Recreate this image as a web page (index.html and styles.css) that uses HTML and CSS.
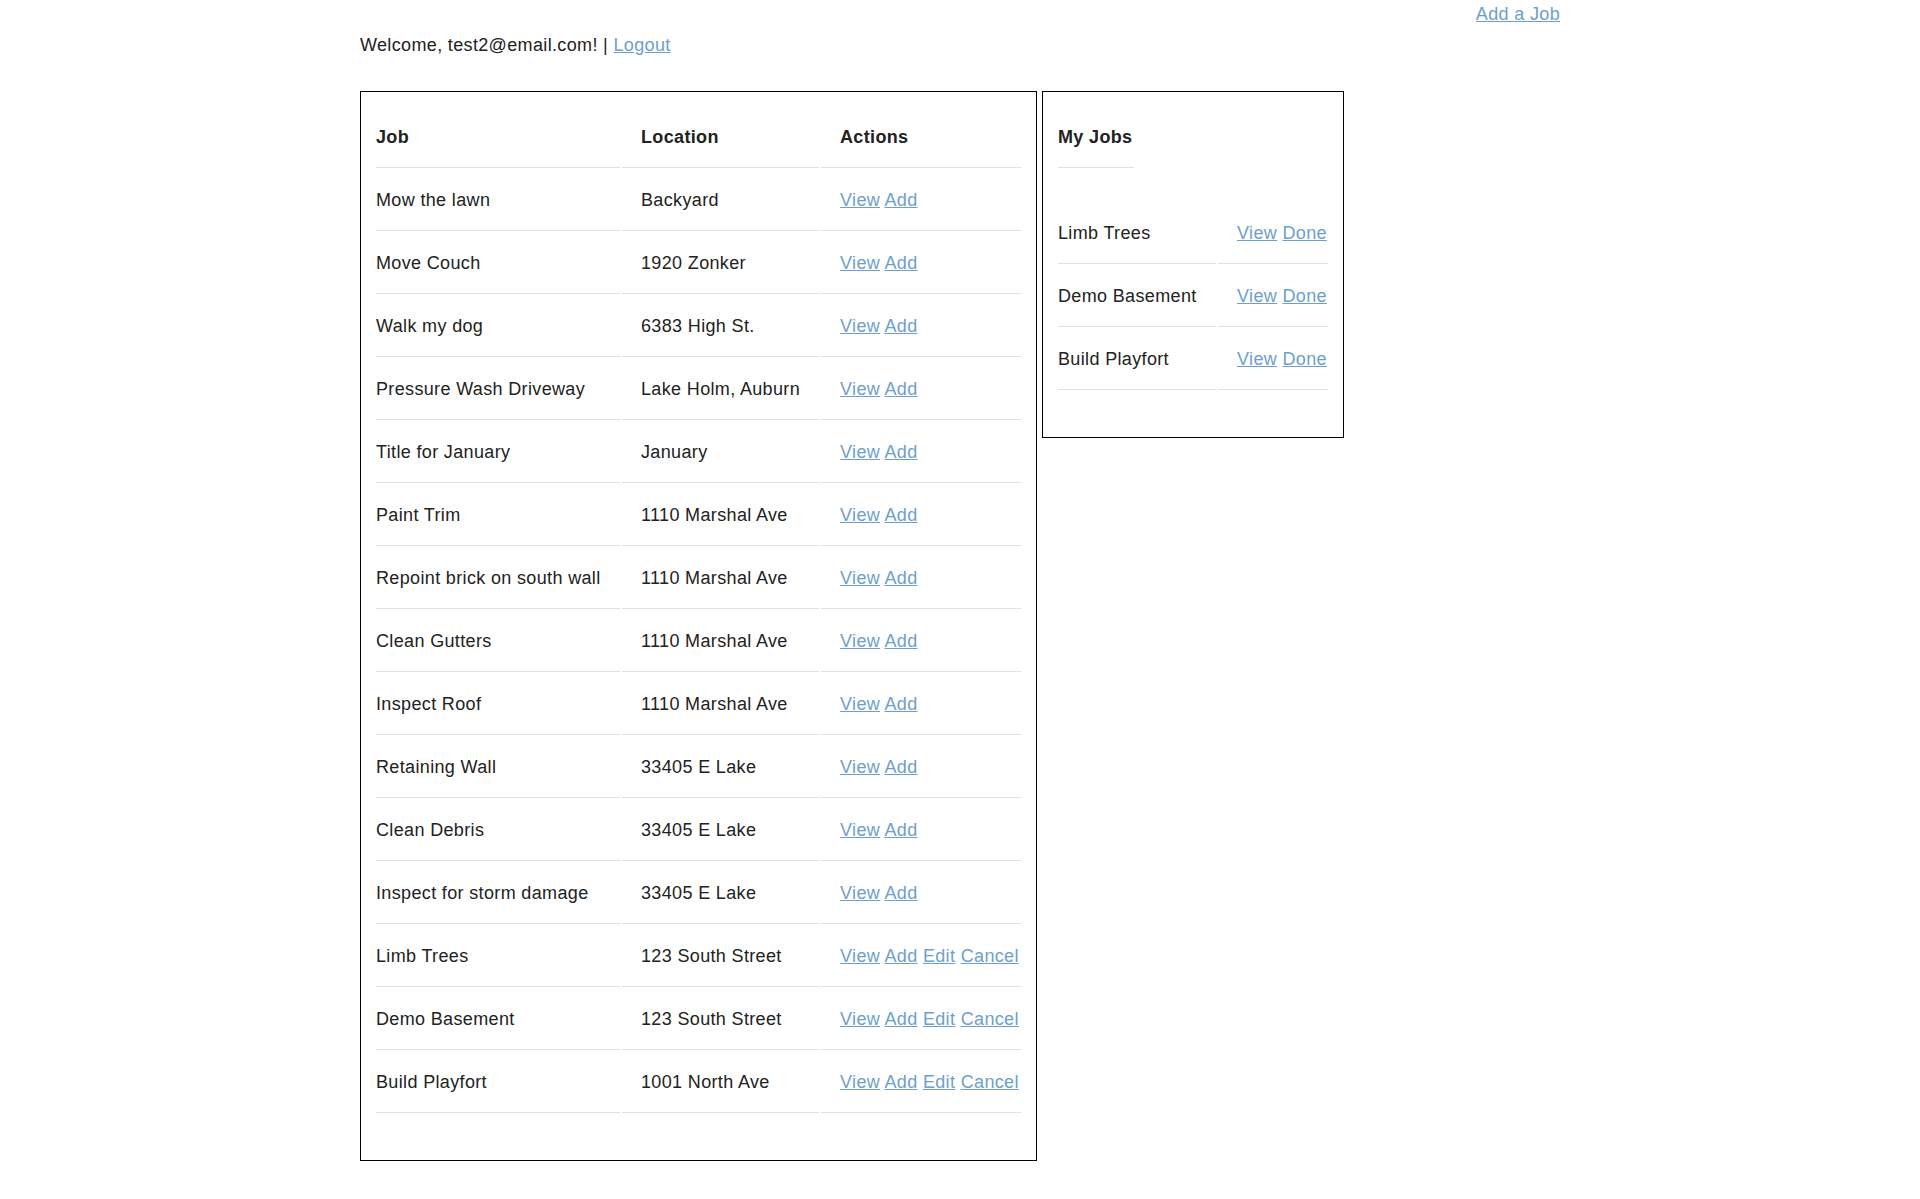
FILE: index.html
```html
<!DOCTYPE html>
<html lang="en">
<head>
<meta charset="utf-8">
<title>Jobs</title>
<link rel="stylesheet" href="styles.css">
</head>
<body>
<div class="container">
  <div class="topbar"><a href="#">Add a Job</a></div>
  <p class="welcome">Welcome, test2@email.com! | <a href="#">Logout</a></p>
  <div class="panels">
    <div class="panel panel-jobs">
      <table class="jobs">
        <thead>
          <tr><th class="c1">Job</th><th class="c2">Location</th><th class="c3">Actions</th></tr>
        </thead>
        <tbody>
          <tr><td>Mow the lawn</td><td>Backyard</td><td><a href="#">View</a> <a href="#">Add</a></td></tr>
          <tr><td>Move Couch</td><td>1920 Zonker</td><td><a href="#">View</a> <a href="#">Add</a></td></tr>
          <tr><td>Walk my dog</td><td>6383 High St.</td><td><a href="#">View</a> <a href="#">Add</a></td></tr>
          <tr><td>Pressure Wash Driveway</td><td>Lake Holm, Auburn</td><td><a href="#">View</a> <a href="#">Add</a></td></tr>
          <tr><td>Title for January</td><td>January</td><td><a href="#">View</a> <a href="#">Add</a></td></tr>
          <tr><td>Paint Trim</td><td>1110 Marshal Ave</td><td><a href="#">View</a> <a href="#">Add</a></td></tr>
          <tr><td>Repoint brick on south wall</td><td>1110 Marshal Ave</td><td><a href="#">View</a> <a href="#">Add</a></td></tr>
          <tr><td>Clean Gutters</td><td>1110 Marshal Ave</td><td><a href="#">View</a> <a href="#">Add</a></td></tr>
          <tr><td>Inspect Roof</td><td>1110 Marshal Ave</td><td><a href="#">View</a> <a href="#">Add</a></td></tr>
          <tr><td>Retaining Wall</td><td>33405 E Lake</td><td><a href="#">View</a> <a href="#">Add</a></td></tr>
          <tr><td>Clean Debris</td><td>33405 E Lake</td><td><a href="#">View</a> <a href="#">Add</a></td></tr>
          <tr><td>Inspect for storm damage</td><td>33405 E Lake</td><td><a href="#">View</a> <a href="#">Add</a></td></tr>
          <tr><td>Limb Trees</td><td>123 South Street</td><td><a href="#">View</a> <a href="#">Add</a> <a href="#">Edit</a> <a href="#">Cancel</a></td></tr>
          <tr><td>Demo Basement</td><td>123 South Street</td><td><a href="#">View</a> <a href="#">Add</a> <a href="#">Edit</a> <a href="#">Cancel</a></td></tr>
          <tr><td>Build Playfort</td><td>1001 North Ave</td><td><a href="#">View</a> <a href="#">Add</a> <a href="#">Edit</a> <a href="#">Cancel</a></td></tr>
        </tbody>
      </table>
    </div>
    <div class="panel panel-mine">
      <table class="mine-head">
        <thead><tr><th>My Jobs</th></tr></thead>
      </table>
      <table class="mine">
        <tbody>
          <tr><td class="m1">Limb Trees</td><td class="m2"><a href="#">View</a> <a href="#">Done</a></td></tr>
          <tr><td class="m1">Demo Basement</td><td class="m2"><a href="#">View</a> <a href="#">Done</a></td></tr>
          <tr><td class="m1">Build Playfort</td><td class="m2"><a href="#">View</a> <a href="#">Done</a></td></tr>
        </tbody>
      </table>
    </div>
  </div>
</div>
</body>
</html>
```

FILE: styles.css
```css
html, body {
  margin: 0;
  padding: 0;
  background: #ffffff;
}

body {
  font-family: "Liberation Sans", Arial, sans-serif;
  font-size: 18px;
  letter-spacing: 0.35px;
  color: #222222;
}

a {
  color: #6d9fcd;
  text-decoration: underline;
}

.container {
  width: 1200px;
  margin: 0 auto;
}

.topbar {
  display: flex;
  justify-content: flex-end;
  line-height: 28px;
  height: 29px;
}

.welcome {
  margin: 1px 0 31px;
  line-height: 30px;
}

.panels {
  display: flex;
  align-items: flex-start;
  gap: 5px;
}

.panel {
  border: 1px solid #000000;
  padding: 13px;
}

table {
  border-collapse: separate;
  border-spacing: 2px;
  table-layout: fixed;
  margin: 0 0 32px;
}

th, td {
  box-sizing: border-box;
  text-align: left;
  padding: 12px 0 12px 19px;
  line-height: 36px;
  border-bottom: 1px solid #e1e1e1;
  white-space: nowrap;
}

th {
  font-weight: bold;
}

th:first-child, td:first-child {
  padding-left: 0;
}

.jobs {
  width: 649px;
}

.c1 { width: 244px; }
.c2 { width: 197px; }
.c3 { width: 200px; }

.mine-head {
  margin-bottom: 31px;
}

.mine-head th {
  width: 76px;
}

.mine {
  width: 274px;
}

.m1 { width: 158px; }
.m2 { width: 110px; }
```
